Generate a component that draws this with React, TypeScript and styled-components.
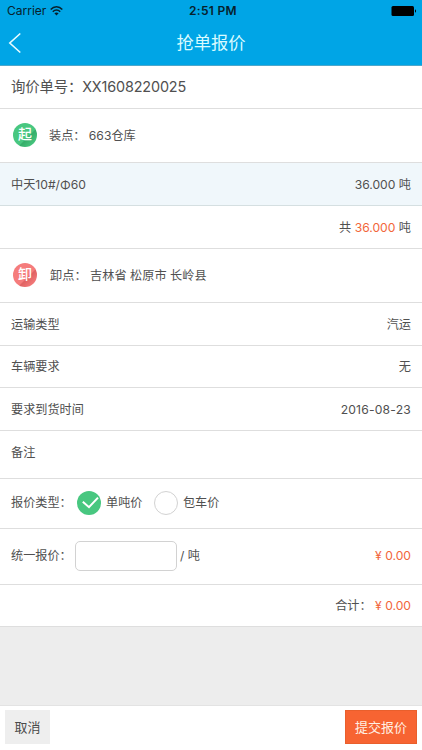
import React, { useState } from "react";
import styled, { createGlobalStyle, css } from "styled-components";

const GlobalStyle = createGlobalStyle`
  * { box-sizing: border-box; }
  body {
    margin: 0;
    background: #ededed;
    font-family: Inter, "Noto Sans CJK SC", sans-serif;
    color: #505050;
  }
`;

const Screen = styled.div`
  width: 100%;
  height: 100vh;
  display: flex;
  flex-direction: column;
  overflow: hidden;
  background: #ededed;
`;

const Header = styled.header`
  flex: none;
  height: 66px;
  background: #00a5e6;
  border-bottom: 1px solid #4da7cb;
`;

const StatusBar = styled.div`
  display: grid;
  grid-template-columns: 1fr auto 1fr;
  align-items: center;
  height: 22px;
  padding: 0 5px 0 7px;
  font-size: 12px;
  line-height: 22px;
  color: #07212c;
`;

const Carrier = styled.div`
  display: flex;
  align-items: center;
  gap: 4px;
`;

const Clock = styled.div`
  font-weight: 600;
  letter-spacing: 0.3px;
  padding-left: 2px;
`;

const Battery = styled.svg`
  justify-self: end;
`;

const NavBar = styled.div`
  display: grid;
  grid-template-columns: 30px 1fr 30px;
  align-items: center;
  height: 42px;
`;

const BackButton = styled.button`
  display: flex;
  padding: 0 0 0 8px;
  border: 0;
  background: none;
`;

const Title = styled.h1`
  margin: 0;
  font-size: 17.3px;
  line-height: 42px;
  font-weight: 400;
  text-align: center;
  color: #d9fbff;
`;

const Row = styled.div<{
  $height: number;
  $tint?: boolean;
  $end?: boolean;
  $large?: boolean;
  $top?: number;
  $bottom?: number;
}>`
  flex: none;
  display: flex;
  align-items: center;
  justify-content: ${(p) => (p.$end ? "flex-end" : "space-between")};
  height: ${(p) => p.$height}px;
  padding: ${(p) => p.$top ?? 0}px 11px ${(p) => p.$bottom ?? 0}px;
  border-bottom: 1px solid ${(p) => (p.$tint ? "#d5dfe1" : "#dedede")};
  background: ${(p) => (p.$tint ? "#f0f7fb" : "#fff")};
  font-size: ${(p) => (p.$large ? 14.4 : 12.15)}px;
  line-height: 20px;
  white-space: pre;
`;

const Group = styled.div`
  display: flex;
  align-items: center;
`;

const Latin = styled.span<{ $spacing: number }>`
  letter-spacing: ${(p) => p.$spacing}px;
`;

const Accent = styled.span`
  color: #f2663a;
`;

const Badge = styled.span<{ $color: string; $shade: string; $gap: number }>`
  display: flex;
  align-items: center;
  justify-content: center;
  width: 24px;
  height: 24px;
  margin: 0 ${(p) => p.$gap}px 2px 2px;
  border-radius: 50%;
  background: linear-gradient(135deg, ${(p) => p.$color} 58%, ${(p) => p.$shade} 62%, ${(p) => p.$color} 88%);
  color: #fff;
  font-size: 14px;
  font-weight: 500;
  line-height: 22px;
  padding-bottom: 2px;
`;

const FieldLabel = styled.span`
  width: 64px;
`;

const Option = styled.button`
  display: flex;
  align-items: center;
  gap: 5px;
  margin: 0 9.5px 0 2px;
  padding: 0;
  border: 0;
  background: none;
  color: inherit;
  font: inherit;
`;

const RadioMark = styled.span<{ $on: boolean }>`
  display: flex;
  width: 24px;
  height: 24px;
  margin-top: 1px;
  border-radius: 50%;
  ${(p) =>
    p.$on
      ? css`background: #48c780;`
      : css`border: 1px solid #d2d2d2; background: #fff;`}
`;

const PriceInput = styled.input`
  width: 102px;
  height: 30px;
  margin-right: 3px;
  padding: 0 8px;
  border: 1px solid #d2d2d2;
  border-radius: 5px;
  background: #fff;
  font: inherit;
  outline: none;
`;

const Footer = styled.footer`
  flex: none;
  display: flex;
  justify-content: space-between;
  height: 45px;
  margin-top: auto;
  padding: 4px 5px 6px;
  border-top: 1px solid #e3e3e3;
  background: #fff;
`;

const Action = styled.button<{ $primary?: boolean }>`
  width: ${(p) => (p.$primary ? 72 : 45)}px;
  height: 34px;
  padding: 0 0 1px;
  border: ${(p) => (p.$primary ? "1px solid #e95f2c" : "0")};
  background: ${(p) => (p.$primary ? "#f76432" : "#eeeeee")};
  color: ${(p) => (p.$primary ? "#fff0e4" : "#4a4a4a")};
  font-family: inherit;
  font-size: 13px;
  line-height: 20px;
`;

const Check = () => (
  <svg width="24" height="24" viewBox="0 0 24 24" fill="none" stroke="#fff" strokeWidth="2">
    <path d="M5.8 10.8 12 16.2 21 6.6" />
  </svg>
);

const Wifi = () => (
  <svg width="13" height="10" viewBox="0 0 13 10" fill="none" stroke="#07212c" strokeWidth="1.5">
    <path d="M.7 3.6C4-.1 9-.1 12.3 3.6M2.8 5.8C5 3.5 8 3.5 10.2 5.8" />
    <path d="M4.4 7.2C5.6 6.1 7.4 6.1 8.6 7.2L6.5 9.4Z" fill="#07212c" stroke="none" />
  </svg>
);

const details = [
  { label: "运输类型", value: "汽运", height: 43, top: 1 },
  { label: "车辆要求", value: "无", height: 42, top: 1 },
  { label: "要求到货时间", value: "2016-08-23", height: 43, top: 1 },
  { label: "备注", value: "", height: 48, bottom: 4 },
];

export default function App() {
  const [mode, setMode] = useState("单吨价");
  const [price, setPrice] = useState("");

  return (
    <Screen>
      <GlobalStyle />
      <Header>
        <StatusBar>
          <Carrier>Carrier<Wifi /></Carrier>
          <Clock>2:51 PM</Clock>
          <Battery width="26" height="10" viewBox="0 0 26 10">
            <rect x="0.5" width="22.5" height="10" rx="1.5" fill="#000" />
            <path d="M24 3.2C25.4 3.8 25.4 6.2 24 6.8Z" fill="#000" />
          </Battery>
        </StatusBar>
        <NavBar>
          <BackButton aria-label="返回">
            <svg width="14" height="22" viewBox="0 0 14 22" fill="none" stroke="#e8fcff" strokeWidth="1.6">
              <path d="M12.3 1.5 1.8 11 12.3 20.5" />
            </svg>
          </BackButton>
          <Title>抢单报价</Title>
        </NavBar>
      </Header>

      <Row $height={43} $large>
        <span><Latin $spacing={-0.15}>询价单号：XX1608220025</Latin></span>
      </Row>
      <Row $height={54} $top={1}>
        <Group>
          <Badge $color="#48c780" $shade="#35ad69" $gap={12}>起</Badge>
          <span>装点： 663仓库</span>
        </Group>
      </Row>
      <Row $height={43} $tint $top={1}>
        <span>中天10#/Φ60</span>
        <span>36.000 吨</span>
      </Row>
      <Row $height={43} $end $top={1}>
        <span>共 <Accent>36.000</Accent> 吨</span>
      </Row>
      <Row $height={54}>
        <Group>
          <Badge $color="#f57c7c" $shade="#df6262" $gap={13}>卸</Badge>
          <Latin $spacing={0.05}>卸点： 吉林省 松原市 长岭县</Latin>
        </Group>
      </Row>
      {details.map((d) => (
        <Row key={d.label} $height={d.height} $top={d.top} $bottom={d.bottom}>
          <span>{d.label}</span>
          <Latin $spacing={d.value.includes("-") ? 0.2 : 0}>{d.value}</Latin>
        </Row>
      ))}
      <Row $height={50} $bottom={2}>
        <Group>
          <FieldLabel>报价类型：</FieldLabel>
          {["单吨价", "包车价"].map((name) => (
            <Option key={name} onClick={() => setMode(name)}>
              <RadioMark $on={mode === name}>{mode === name && <Check />}</RadioMark>
              {name}
            </Option>
          ))}
        </Group>
      </Row>
      <Row $height={56} $bottom={2}>
        <Group>
          <FieldLabel>统一报价：</FieldLabel>
          <PriceInput value={price} onChange={(e) => setPrice(e.target.value)} />
          <span>/ 吨</span>
        </Group>
        <Accent>¥ 0.00</Accent>
      </Row>
      <Row $height={42} $end $top={1}>
        <span>合计： <Accent>¥ 0.00</Accent></span>
      </Row>

      <Footer>
        <Action>取消</Action>
        <Action $primary>提交报价</Action>
      </Footer>
    </Screen>
  );
}
